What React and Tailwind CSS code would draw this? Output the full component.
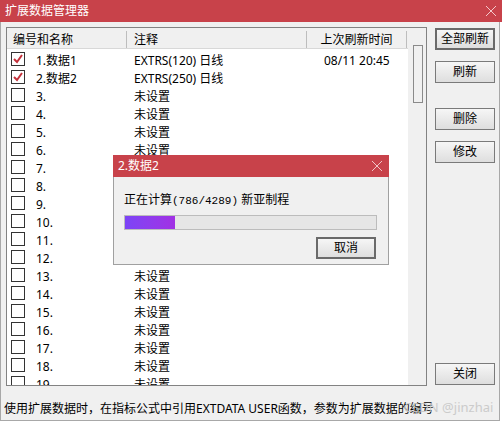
import React from 'react';

const rows = [
    { no: '1.数据1', note: 'EXTRS(120) 日线', time: '08/11 20:45', checked: true },
    { no: '2.数据2', note: 'EXTRS(250) 日线', time: '', checked: true },
    // rows 7 - 12 sit under the progress dialog, their note column is hidden
    ...Array.from({ length: 17 }, (_, i) => ({
        no: `${i + 3}.`,
        note: i + 3 >= 7 && i + 3 <= 12 ? '' : '未设置',
        time: '',
        checked: false,
    })),
];

function CloseX({ className }) {
    return (
        <svg width="12" height="12" viewBox="0 0 12 12" className={className}>
            <path d="M1 1 L11 11 M11 1 L1 11" stroke="currentColor" strokeWidth="1" fill="none" />
        </svg>
    );
}

function CheckBox({ checked }) {
    return (
        <div className="w-[14px] h-[14px] border border-[#333] bg-white flex items-center justify-center">
            {checked && (
                <svg width="12" height="12" viewBox="0 0 12 12">
                    <path d="M2 6 L5 9 L10 2" stroke="#c4303a" strokeWidth="2" fill="none" />
                </svg>
            )}
        </div>
    );
}

function WinButton({ children, strong = false, className = '' }) {
    return (
        <button
            type="button"
            className={`w-[60px] h-[22px] text-[12px] leading-none text-black bg-gradient-to-b from-[#f6f6f6] to-[#dedede] ${strong ? 'border-2 border-[#6a6a6a]' : 'border border-[#7a7a7a]'} ${className}`}
        >
            {children}
        </button>
    );
}

export default function App() {
    return (
        <div
            className="relative w-[502px] h-[421px] bg-white overflow-hidden text-black"
            style={{ fontFamily: '"Noto Sans", "Noto Sans CJK SC", sans-serif' }}
        >
            {/* Title bar */}
            <div className="h-[22px] bg-[#c8424a] flex items-center justify-between pl-[5px] pr-[5px] text-white">
                <span className="text-[12px] leading-none">扩展数据管理器</span>
                <CloseX className="text-[#f3c9cb]" />
            </div>

            {/* Window body */}
            <div className="w-[500px] h-[399px] bg-[#f0f0f0] border-l border-r border-b border-[#a8a8a8] flex flex-col">
                <div className="flex pt-[5px] pl-[5px]">
                    {/* List */}
                    <div className="w-[421px] h-[359px] border border-[#828282] bg-white flex overflow-hidden">
                        <div className="w-[401px] flex flex-col">
                            <div className="h-[21px] shrink-0 flex bg-[#f0f0f0] border-b border-[#d8d8d8] text-[12px] leading-none pt-[3px]">
                                <div className="w-[120px] pl-[6px] flex items-center border-r border-[#bdbdbd]">编号和名称</div>
                                <div className="w-[180px] pl-[7px] flex items-center border-r border-[#bdbdbd]">注释</div>
                                <div className="w-[100px] flex items-center justify-center border-r border-[#bdbdbd]">上次刷新时间</div>
                            </div>
                            <div className="flex flex-col text-[12px] leading-none pt-[1px]">
                                {rows.map((r) => (
                                    <div key={r.no} className="h-[18px] flex items-center shrink-0">
                                        <div className="w-[29px] pl-[4px]">
                                            <CheckBox checked={r.checked} />
                                        </div>
                                        <div className="w-[98px] pt-[4px]">{r.no}</div>
                                        <div className="w-[190px] pt-[4px]">{r.note}</div>
                                        <div className="pt-[4px]">{r.time}</div>
                                    </div>
                                ))}
                            </div>
                        </div>
                        {/* Scrollbar */}
                        <div className="w-[18px] bg-[#f0f0f0] pt-[17px] pl-[5px]">
                            <div className="w-[10px] h-[58px] border border-[#8a8a8a] bg-[#f0f0f0]" />
                        </div>
                    </div>

                    {/* Buttons */}
                    <div className="ml-[8px] flex flex-col">
                        <WinButton strong className="mt-[1px]">全部刷新</WinButton>
                        <WinButton className="mt-[11px]">刷新</WinButton>
                        <WinButton className="mt-[25px]">删除</WinButton>
                        <WinButton className="mt-[11px]">修改</WinButton>
                        <WinButton className="mt-[200px]">关闭</WinButton>
                    </div>
                </div>

                {/* Footer */}
                <div className="relative pl-[3px] pt-[17px] text-[12px] leading-none">
                    使用扩展数据时，在指标公式中引用EXTDATA USER函数，参数为扩展数据的编号
                    <span className="absolute left-[403px] top-[15px] text-[13px] text-[#c8c8c8] opacity-90">CSDN @jinzhai</span>
                </div>
            </div>

            {/* Progress dialog */}
            <div className="absolute left-[113px] top-[155px] w-[276px] h-[110px] flex flex-col">
                <div className="h-[22px] bg-[#c8424a] flex items-center justify-between pl-[5px] pr-[6px] text-white">
                    <span className="text-[12px] leading-none">2.数据2</span>
                    <CloseX className="text-[#f0c4c6]" />
                </div>
                <div className="flex-1 bg-[#f0f0f0] border-l border-r border-b border-[#a0a0a0] pl-[10px] pt-[17px]">
                    <div className="text-[12px] leading-none">
                        正在计算<span style={{ fontFamily: '"Liberation Mono", monospace' }} className="text-[11px]">(786/4289)</span> 新亚制程
                    </div>
                    <div className="mt-[8px] w-[253px] h-[15px] border border-[#bcbcbc] bg-[#e6e6e6]">
                        <div className="h-full bg-gradient-to-r from-[#7c44f6] to-[#a130e4]" style={{ width: '50px' }} />
                    </div>
                    <div className="flex justify-end pr-[12px] mt-[7px]">
                        <WinButton strong>取消</WinButton>
                    </div>
                </div>
            </div>
        </div>
    );
}
